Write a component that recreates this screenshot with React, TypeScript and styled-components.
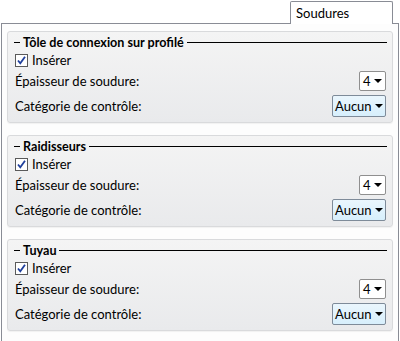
import styled, { createGlobalStyle } from 'styled-components';

const GlobalStyle = createGlobalStyle`
  html, body {
    margin: 0;
    padding: 0;
    background: #ffffff;
  }
  body {
    font-family: Lato, 'Noto Sans', sans-serif;
    font-size: 13px;
    color: #000;
  }
`;

const Window = styled.div`
  width: 400px;
  height: 341px;
  overflow: hidden;
  display: flex;
  flex-direction: column;
`;

const TabStrip = styled.div`
  display: flex;
  justify-content: flex-end;
  padding: 1px 7px 0 0;
  height: 22px;
  position: relative;
  z-index: 1;
`;

const Tab = styled.div`
  width: 103px;
  height: 23px;
  box-sizing: border-box;
  border: 1px solid #898c95;
  border-bottom: none;
  border-radius: 2px 2px 0 0;
  background: #ffffff;
  padding: 3px 0 0 5px;
  line-height: 17px;
`;

const Panel = styled.div`
  margin: 0 1px;
  border: 1px solid #898c95;
  border-bottom: none;
  flex: 1;
  background: #fdfdfd;
  padding: 7px 5px 0 5px;
  display: flex;
  flex-direction: column;
  gap: 12px;
`;

const Group = styled.section`
  border: 1px solid #d9dadc;
  border-radius: 3px;
  background: linear-gradient(#f4f4f4, #e9eaec);
  box-shadow: 0 1px 1px rgba(0, 0, 0, 0.05);
  padding: 2px 5px 4px 6px;
  height: 92px;
  box-sizing: border-box;
  display: flex;
  flex-direction: column;
`;

const Header = styled.div`
  display: flex;
  align-items: center;
  height: 18px;
`;

const Rule = styled.span<{ $grow?: boolean }>`
  height: 1px;
  background: #000;
  width: 6px;
  flex: ${(p) => (p.$grow ? '1' : '0 0 6px')};
`;

const Title = styled.span`
  font-weight: bold;
  font-size: 12.6px;
  padding: 0 3px;
  white-space: nowrap;
`;

const CheckRow = styled.label`
  display: flex;
  align-items: center;
  gap: 4px;
  height: 17px;
  margin-left: 1px;
`;

const Box = styled.span`
  width: 13px;
  height: 13px;
  box-sizing: border-box;
  border: 1px solid #5a5a5a;
  background: #fff;
  display: flex;
  align-items: center;
  justify-content: center;
`;

const FieldRow = styled.div`
  display: flex;
  align-items: center;
  justify-content: space-between;
  height: 25px;
  margin-left: 1px;
`;

const Combo = styled.div<{ $button?: boolean }>`
  display: flex;
  align-items: center;
  justify-content: space-between;
  box-sizing: border-box;
  height: ${(p) => (p.$button ? '22px' : '20px')};
  width: ${(p) => (p.$button ? '54px' : '27px')};
  padding: ${(p) => (p.$button ? '0 5px 0 2px' : '0 4px 0 3px')};
  border: 1px solid ${(p) => (p.$button ? '#7e8b99' : '#8f8f8f')};
  border-radius: 2px;
  background: ${(p) =>
    p.$button ? 'linear-gradient(#eaf6fd, #d7effc)' : '#ffffff'};
  margin-right: 1px;
`;

const Arrow = styled.span`
  flex: none;
  margin-left: 3px;
  width: 0;
  height: 0;
  border-left: 4px solid transparent;
  border-right: 4px solid transparent;
  border-top: 4px solid #000;
`;

const Check = () => (
  <svg width="11" height="11" viewBox="0 0 11 11">
    <path d="M2 5.5 L4.3 8.3 L9 1.8" fill="none" stroke="#1f3f9c" strokeWidth="1.8" />
  </svg>
);

const sections = ['Tôle de connexion sur profilé', 'Raidisseurs', 'Tuyau'];

export default function App() {
  return (
    <Window>
      <GlobalStyle />
      <TabStrip>
        <Tab>Soudures</Tab>
      </TabStrip>
      <Panel>
        {sections.map((name) => (
          <Group key={name}>
            <Header>
              <Rule />
              <Title>{name}</Title>
              <Rule $grow />
            </Header>
            <CheckRow>
              <Box>
                <Check />
              </Box>
              Insérer
            </CheckRow>
            <FieldRow>
              <span>Épaisseur de soudure:</span>
              <Combo>
                4
                <Arrow />
              </Combo>
            </FieldRow>
            <FieldRow>
              <span>Catégorie de contrôle:</span>
              <Combo $button>
                Aucun
                <Arrow />
              </Combo>
            </FieldRow>
          </Group>
        ))}
      </Panel>
    </Window>
  );
}
